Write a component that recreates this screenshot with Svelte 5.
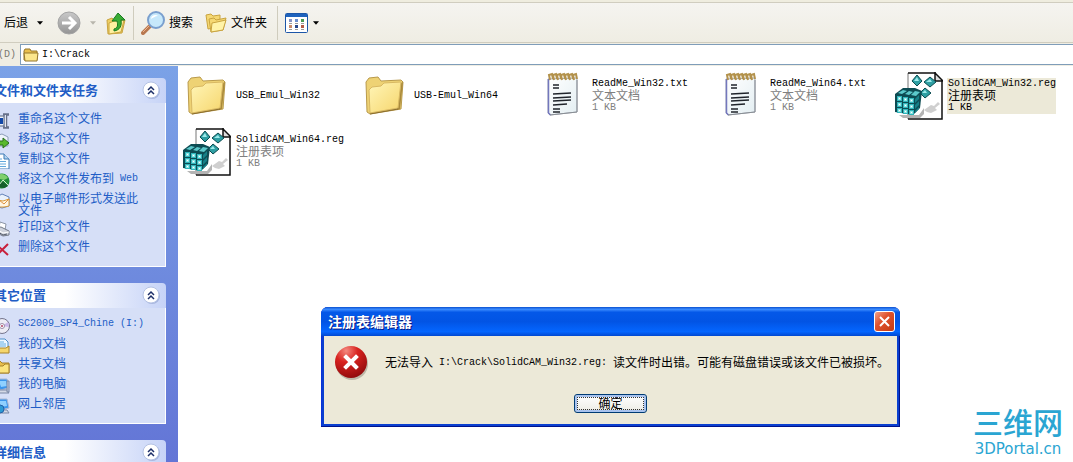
<script>
  let selected = $state("SolidCAM_Win32.reg");
  let showError = $state(true);
  let address = $state("I:\\Crack");

  const files = [
    { name: "USB_Emul_Win32", icon: "folder" },
    { name: "USB-Emul_Win64", icon: "folder" },
    { name: "ReadMe_Win32.txt", icon: "text", type: "文本文档", size: "1 KB" },
    { name: "ReadMe_Win64.txt", icon: "text", type: "文本文档", size: "1 KB" },
    { name: "SolidCAM_Win32.reg", icon: "reg", type: "注册表项", size: "1 KB" },
    { name: "SolidCAM_Win64.reg", icon: "reg", type: "注册表项", size: "1 KB" },
  ];

  const panels = [
    {
      title: "文件和文件夹任务",
      links: [
        { icon: "rename", text: "重命名这个文件" },
        { icon: "move", text: "移动这个文件" },
        { icon: "copy", text: "复制这个文件" },
        { icon: "web", text: "将这个文件发布到", latin: " Web" },
        { icon: "mail", text: "以电子邮件形式发送此文件" },
        { icon: "print", text: "打印这个文件" },
        { icon: "delete", text: "删除这个文件" },
      ],
    },
    {
      title: "其它位置",
      links: [
        { icon: "disc", text: "", latin: "SC2009_SP4_Chine (I:)" },
        { icon: "docs", text: "我的文档" },
        { icon: "shared", text: "共享文档" },
        { icon: "computer", text: "我的电脑" },
        { icon: "network", text: "网上邻居" },
      ],
    },
    { title: "详细信息", links: [] },
  ];

  // cells on the front face of the registry cube
  const front = [
    [2, 24], [8, 25], [14, 26],
    [2, 30], [8, 31], [14, 32],
    [2, 36], [8, 37], [14, 38],
  ];
</script>

{#snippet taskIcon(name)}
  <svg class="task-icon" viewBox="0 0 16 16" aria-hidden="true">
    {#if name === "rename"}
      <path d="M0 3h10v10H0z" fill="#eef3fb" stroke="#56657f" />
      <path d="M0 5h9v6H0z" fill="#1248a8" />
      <path d="M9 1.500h6M9 14.500h6M12 2v12" stroke="#67718a" stroke-width="2.500" fill="none" />
      <path d="M11.500 2v12" stroke="#e4e8f0" />
    {:else if name === "move"}
      <path d="M1 3l7-2 6 3v9H1z" fill="#eef4fb" stroke="#8c9db8" />
      <path d="M3 8h6V5l6 5-6 5v-3H3z" fill="#58b92c" stroke="#28711a" />
    {:else if name === "copy"}
      <path d="M1 1h9l5 5v10H1z" fill="#fff" stroke="#3c78b4" />
      <path d="M10 1v5h5" fill="#b4d4f0" stroke="#3c78b4" />
      <path d="M3 6h5M3 8.500h9M3 11h9M3 13.500h9" stroke="#64a8dc" />
    {:else if name === "web"}
      <circle cx="8" cy="8" r="7.500" fill="#1f8b38" />
      <path d="M2 4c3-4 9-4 12 1l-4 2-4-1z" fill="#7fcf6c" />
      <path d="M4 14l4-6 6 5-4 2z" fill="#155f2c" />
      <path d="M5 12l4-5 5 5" stroke="#d5f2cc" fill="none" />
    {:else if name === "mail"}
      <path d="M1 5l7-4 7 3v9l-7 2-7-2z" fill="#eaf2fc" stroke="#6282b8" />
      <path d="M3 7l6 1 6-2v7l-5 1H3z" fill="#fff6e4" stroke="#d89a3c" />
      <path d="M5 7l5 4 5-5" stroke="#e0903c" fill="none" />
    {:else if name === "print"}
      <path d="M6 1l6 2-1 6-6-2z" fill="#fff" stroke="#8d96a6" />
      <path d="M1 7l6-1 8 4v4l-6 1-8-4z" fill="#cfd3dc" stroke="#737a88" />
      <path d="M2 8l7 4 6-1" stroke="#fff" fill="none" />
      <path d="M4 11l5 3 4-1" stroke="#555c69" fill="none" />
    {:else if name === "delete"}
      <path d="M3 4l11 10M14 3L3 14" stroke="#c8203c" stroke-width="2" fill="none" />
    {:else if name === "disc"}
      <circle cx="8" cy="8" r="7.500" fill="#ececf5" stroke="#74748c" />
      <path d="M8 8l6-4a7 7 0 0 1 1 5z" fill="#c9b8e8" />
      <circle cx="8" cy="8" r="2.500" fill="#fff" stroke="#9a8ca6" />
      <circle cx="8" cy="8" r="1" fill="#b04060" />
    {:else if name === "docs"}
      <path d="M2 1h9l3 3v8H2z" fill="#eef7ff" stroke="#4d8fc8" />
      <path d="M4 4h6M4 6h8M4 8h8" stroke="#65b0e4" />
      <path d="M0 10h12l3-2v7H0z" fill="#f5d66c" stroke="#a8842c" />
    {:else if name === "shared"}
      <path d="M0 3h6l2 2h7v10H0z" fill="#e9bf4c" stroke="#a5812a" />
      <path d="M0 8h9l2-2h4v9H0z" fill="#fbe47e" stroke="#a5812a" />
    {:else}
      <path d="M3 1h10l2 9-9 2z" fill="#3b95ec" stroke="#a9b7d2" />
      <path d="M5 3h7l1 5-6 1z" fill="#8fd0ff" />
      <path d="M1 12h12l2 3H3z" fill="#d4d9e6" stroke="#7a88a6" />
      {#if name === "network"}
        <circle cx="6" cy="11" r="4" fill="#2d9ad4" stroke="#2460a8" />
      {:else}
        <path d="M13 3h2v11h-2z" fill="#c2cbdd" stroke="#7a88a6" />
      {/if}
    {/if}
  </svg>
{/snippet}

{#snippet fileIcon(name)}
  <svg class="file-icon" viewBox="0 0 48 48" aria-hidden="true">
    {#if name === "folder"}
      <path d="M5 10l3-4 9-1 3 4 20-1 2 2-2 27-31 5-3-2z" fill="#eed274" stroke="#b99a4b" />
      <path d="M38 12l4-2-3 27-3 1z" fill="#a98a3c" />
      <path d="M8 18l3-3 9-1 3-3 17-1-3 26-28 5z" fill="url(#folderFill)" stroke="#d8b862" />
      <path d="M9 42l28-5" stroke="#8a6d2e" fill="none" />
    {:else if name === "text"}
      <path d="M9 7l29-1v34l-27 3-2-2z" fill="url(#noteFill)" stroke="#a5abb8" />
      <path d="M9.500 7v34l2 2" stroke="#7377bd" stroke-width="1.500" fill="none" />
      <path d="M38 8v32L11 43" stroke="#898e94" fill="none" />
      {#each [12, 16, 20, 24, 28, 32, 36] as x}
        <path d="M{x - 1} 8l-1-5 3-1 1 5" stroke="#b3924c" stroke-width="2" fill="none" />
      {/each}
      <path d="M14 13h6M14 16h6M14 22l18-1M14 26l18-1M14 29l18-1M14 33l14-1M14 37h7M14 40h7" stroke="#20242b" stroke-width="1.300" fill="none" />
    {:else}
      <path d="M13 1h28l7 7v40H13z" fill="#fff" />
      <path d="M13 1v46" stroke="#777" fill="none" />
      <path d="M13 1h28M13 47h34V8" stroke="#111" stroke-width="1.500" fill="none" />
      <path d="M40 1v8h8z" fill="#ddd" stroke="#111" stroke-width="1.500" />
      <path d="M4 43h20l5-7v6l-4 4H8z" fill="#b4b4b4" />
      <path d="M29 38l7-5 3 1 4-4 2 2-5 4 2 2-6 3-4-1z" fill="#cfcfcf" />
      <g stroke="#0b4b50">
        <path d="M22 3l5 6-5 5-5-5z" fill="#2e9fa3" />
        <path d="M35 5l6 5-6 5-6-5z" fill="#2e9fa3" />
        <path d="M30 16l6 5-6 5-5-5z" fill="#2e9fa3" />
      </g>
      <path d="M22 5l2 4h-5zM35 7l2 3h-6zM30 18l2 3h-5z" fill="#9eeaea" />
      <path d="M0 22l8-6h12l7 3-2 17-7 7-18-3z" fill="#0d4c53" />
      <path d="M3 21l5-3 4 1-5 3zM10 22l4-3 4 1-4 3zM16 23l4-4 5 1-4 4z" fill="#5cc9cb" />
      <path d="M20 27l4-4v4l-4 4zM20 33l4-4v4l-4 4zM20 39l4-4v2l-4 4z" fill="#168087" />
      {#each front as [x, y]}
        <rect {x} {y} width="5" height="5" fill="#2fb5bb" />
        <rect x={x + 1} y={y + 1} width="3" height="3" fill="#8fe4e4" />
        <rect x={x + 2} y={y + 2} width="1" height="1" fill="#fff" />
      {/each}
    {/if}
  </svg>
{/snippet}

<svg class="defs" aria-hidden="true">
  <defs>
    <linearGradient id="folderFill" x1="0" y1="0" x2="1" y2="1">
      <stop offset="0" stop-color="#fff6b8" />
      <stop offset="1" stop-color="#f6d56c" />
    </linearGradient>
    <linearGradient id="noteFill" x1="0" y1="0" x2="1" y2="1">
      <stop offset="0" stop-color="#ffffff" />
      <stop offset="1" stop-color="#e3eef2" />
    </linearGradient>
    <radialGradient id="errorFill" cx="0.35" cy="0.15" r="0.9">
      <stop offset="0" stop-color="#f58a80" />
      <stop offset="0.4" stop-color="#d8231f" />
      <stop offset="1" stop-color="#8e0a0c" />
    </radialGradient>
    <linearGradient id="grayFill" x1="0" y1="0" x2="0" y2="1">
      <stop offset="0" stop-color="#c9c9c9" />
      <stop offset="1" stop-color="#949494" />
    </linearGradient>
  </defs>
</svg>

<div class="explorer">
  <header class="toolbar">
    <button class="tool">
      后退
      <svg class="caret" viewBox="0 0 7 4"><path d="M0 0h7L3.500 4z" /></svg>
    </button>
    <button class="tool forward" aria-label="前进" disabled>
      <svg width="24" height="24" viewBox="0 0 24 24">
        <circle cx="12" cy="12" r="11" fill="url(#grayFill)" stroke="#a4a4a4" />
        <path d="M5 12h12M12 6l6 6-6 6" stroke="#fff" stroke-width="3" fill="none" />
      </svg>
      <svg class="caret" viewBox="0 0 7 4"><path d="M0 0h7L3.500 4z" /></svg>
    </button>
    <button class="tool up" aria-label="向上">
      <svg width="20" height="24" viewBox="0 0 20 24">
        <path d="M1 9l5-2 2 2 9-2 2 2-3 13-14 1z" fill="#efcf62" stroke="#c9a440" />
        <path d="M3 12l5-2 10-1-3 12-12 2z" fill="#fff0a0" stroke="#c9a440" />
        <path d="M8 18c4-1 4-4 3-8H6l6-8 7 7h-4c1 6-1 10-7 11z" fill="#39ac35" stroke="#197a20" />
      </svg>
    </button>
    <span class="divider"></span>
    <button class="tool search">
      <svg width="24" height="24" viewBox="0 0 24 24">
        <path d="M2 22l7-7" stroke="#b87850" stroke-width="4" stroke-linecap="round" />
        <path d="M2 21l6-6" stroke="#f0b48c" stroke-width="1" />
        <circle cx="15" cy="9" r="8" fill="#c6e8fb" stroke="#7a9fce" stroke-width="2" />
        <path d="M10 8c0-4 5-5 7-3-3 0-5 2-7 3z" fill="#fff" />
      </svg>
      搜索
    </button>
    <button class="tool folders">
      <svg width="22" height="20" viewBox="0 0 22 20">
        <path d="M1 2l5-1 2 2 7-1v12L3 16z" fill="#f5d873" stroke="#c9a440" />
        <path d="M4 6l5-1 2 2 10-2-3 12-12 2z" fill="#f5d873" stroke="#c9a440" />
        <path d="M7 10l5-1 9-2-3 10-12 2z" fill="#fff3a8" stroke="#c9a440" />
      </svg>
      文件夹
    </button>
    <span class="divider"></span>
    <button class="tool views" aria-label="查看">
      <svg width="23" height="20" viewBox="0 0 23 20">
        <rect x="0.500" y="0.500" width="22" height="19" rx="1" fill="#fff" stroke="#1c56a8" />
        <path d="M1 1h21v3H1z" fill="#1f63bd" />
        <path d="M4 6h3v3H4z" fill="#8794c4" /><path d="M10 6h3v3h-3z" fill="#6b8fd0" /><path d="M16 6h3v3h-3z" fill="#4b9a52" />
        <path d="M4 12h3v3H4z" fill="#c98a6a" /><path d="M10 12h3v3h-3z" fill="#27488c" /><path d="M16 12h3v3h-3z" fill="#b35c46" />
        <path d="M4 10.500h3M10 10.500h3M16 10.500h3M4 16.500h3M10 16.500h3M16 16.500h3" stroke="#9a9a9a" />
      </svg>
      <svg class="caret" viewBox="0 0 7 4"><path d="M0 0h7L3.500 4z" /></svg>
    </button>
  </header>

  <div class="address">
    <label for="address">地址<span class="latin">(D)</span></label>
    <div class="field">
      <svg width="16" height="14" viewBox="0 0 16 14">
        <path d="M1 3l1-2h5l1 2h6v9H1z" fill="#e9bf4c" stroke="#94762c" />
        <path d="M1 5h14l-1 8H2z" fill="#fbe68c" stroke="#94762c" />
      </svg>
      <input id="address" class="latin" bind:value={address} spellcheck="false" />
    </div>
  </div>

  <div class="content">
    <aside>
      {#each panels as panel}
        <section class="panel">
          <h2>
            {panel.title}
            <button class="collapse" aria-label="折叠">
              <svg width="19" height="19" viewBox="0 0 19 19">
                <circle cx="10" cy="10" r="8" fill="#7f92c4" opacity="0.500" />
                <circle cx="9" cy="9" r="8" fill="#fff" stroke="#b4c2e4" />
                <path d="M6 9l3-3 3 3M6 13l3-3 3 3" stroke="#1d2f68" stroke-width="1.500" fill="none" />
              </svg>
            </button>
          </h2>
          {#if panel.links.length}
            <ul>
              {#each panel.links as link}
                <li>
                  {@render taskIcon(link.icon)}
                  <a href="#{link.icon}">{link.text}{#if link.latin}<span class="latin">{link.latin}</span>{/if}</a>
                </li>
              {/each}
            </ul>
          {/if}
        </section>
      {/each}
    </aside>

    <main>
      {#each files as file}
        <button
          class="file"
          class:selected={selected === file.name}
          onclick={() => (selected = file.name)}
        >
          {@render fileIcon(file.icon)}
          <span class="info">
            <span class="latin">{file.name}</span>
            {#if file.type}
              <span class="meta">{file.type}</span>
              <span class="meta latin">{file.size}</span>
            {/if}
          </span>
        </button>
      {/each}
    </main>
  </div>

  <div class="watermark">
    <span class="mark">三维网</span>
    <span class="site">3DPortal.cn</span>
  </div>

  {#if showError}
    <div class="dialog" role="alertdialog" aria-labelledby="dialog-title">
      <div class="titlebar">
        <h1 id="dialog-title">注册表编辑器</h1>
        <button class="close" aria-label="关闭" onclick={() => (showError = false)}>
          <svg width="13" height="13" viewBox="0 0 13 13">
            <path d="M2 2l9 9M11 2l-9 9" stroke="#fff" stroke-width="2" />
          </svg>
        </button>
      </div>
      <div class="dialog-body">
        <div class="message">
          <svg width="34" height="34" viewBox="0 0 34 34">
            <circle cx="17" cy="18" r="16" fill="#8d8878" opacity="0.500" />
            <circle cx="16" cy="16" r="16" fill="url(#errorFill)" />
            <path d="M11 11l10 10M21 11L11 21" stroke="#fff" stroke-width="4" stroke-linecap="square" />
          </svg>
          <p>无法导入<span class="latin">{" I:\\Crack\\SolidCAM_Win32.reg: "}</span>读文件时出错。可能有磁盘错误或该文件已被损坏。</p>
        </div>
        <button class="ok" onclick={() => (showError = false)}>确定</button>
      </div>
    </div>
  {/if}
</div>

<style>
  :global(body) {
    margin: 0;
    background: #fff;
  }
  .explorer {
    position: relative;
    display: flex;
    flex-direction: column;
    height: 100vh;
    overflow: hidden;
    font: 12px/12px "Liberation Sans", "Noto Sans CJK SC", sans-serif;
    color: #000;
  }
  .explorer button {
    font-family: inherit;
    font-size: 12px;
    line-height: 12px;
    color: inherit;
    border: none;
    background: none;
    padding: 0;
  }
  .latin {
    font-family: "Liberation Mono", monospace;
    font-size: 10px;
    line-height: 12px;
    vertical-align: top;
    white-space: pre;
  }
  .defs {
    position: absolute;
    width: 0;
    height: 0;
  }

  .toolbar {
    flex: none;
    display: flex;
    align-items: center;
    height: 39px;
    border-top: 1px solid #d0cdbf;
    border-bottom: 1px solid #d0cdbf;
    margin-top: 2px;
    padding-left: 4px;
    background: linear-gradient(#f5f4f0, #efede3);
    box-shadow: 0 -2px #efeddf;
  }
  .tool {
    display: flex;
    align-items: center;
    gap: 4px;
  }
  .caret {
    width: 6px;
    height: 4px;
    margin-left: 5px;
  }
  .forward {
    margin-left: 14px;
  }
  .forward .caret {
    fill: #b8b6ac;
  }
  .up {
    margin-left: 10px;
  }
  .divider {
    width: 1px;
    height: 34px;
    margin: 0 7px;
    background: #cfccbd;
  }
  .folders {
    margin-left: 12px;
  }
  .folders + .divider {
    margin-left: 10px;
  }
  .views {
    gap: 0;
  }

  .address {
    flex: none;
    display: flex;
    align-items: center;
    gap: 4px;
    padding: 1px 0;
    background: #efede3;
  }
  .address label {
    display: flex;
    align-items: center;
    justify-content: flex-end;
    width: 16px;
    overflow: hidden;
    white-space: nowrap;
    color: #7b7970;
  }
  .field {
    flex: 1;
    display: flex;
    align-items: center;
    gap: 3px;
    height: 19px;
    padding-left: 2px;
    border: 1px solid #7f9db9;
    border-right: none;
    background: #fff;
  }
  .field input {
    flex: 1;
    border: none;
    outline: none;
    padding: 0;
    color: #000;
  }

  .content {
    flex: 1;
    display: flex;
    min-height: 0;
  }
  aside {
    flex: none;
    box-sizing: border-box;
    width: 208px;
    margin-left: -30px;
    padding: 12px;
    overflow: hidden;
    background: linear-gradient(#7ba2e7, #6375d6);
  }
  .panel {
    margin-bottom: 16px;
  }
  .panel h2 {
    display: flex;
    align-items: center;
    justify-content: space-between;
    height: 25px;
    margin: 0;
    padding: 0 5px 0 12px;
    border-radius: 4px 4px 0 0;
    font-size: 13px;
    line-height: 25px;
    color: #215dc6;
    background: linear-gradient(to right, #fff 45%, #c6d3f7);
  }
  .collapse {
    display: flex;
  }
  .panel ul {
    display: flex;
    flex-direction: column;
    gap: 4px;
    margin: 0;
    padding: 10px 20px 9px 11px;
    list-style: none;
    border: 1px solid #fff;
    border-top: none;
    background: #d6dff7;
  }
  .panel li {
    display: flex;
    align-items: flex-start;
    gap: 8px;
  }
  .task-icon {
    flex: none;
    width: 16px;
    height: 16px;
  }
  .panel a {
    color: #215dc6;
    text-decoration: none;
  }
  .panel a:hover {
    color: #428eff;
    text-decoration: underline;
  }

  main {
    flex: 1;
    display: grid;
    grid-template-columns: repeat(auto-fill, 178px);
    grid-auto-rows: 56px;
    align-content: start;
    padding: 2px 0 0 5px;
    background: #fff;
  }
  .file {
    display: flex;
    align-items: center;
    gap: 4px;
    text-align: left;
  }
  .file-icon {
    flex: none;
    width: 48px;
    height: 48px;
  }
  .info {
    display: flex;
    flex-direction: column;
    padding-left: 1px;
  }
  .meta {
    color: #808080;
  }
  .selected .info {
    background: #ece9d8;
  }
  .selected .meta {
    color: #000;
  }

  .watermark {
    position: absolute;
    right: 10px;
    bottom: 4px;
    display: flex;
    flex-direction: column;
    align-items: center;
    color: #2aa5d2;
  }
  .mark {
    font-size: 30px;
    font-weight: 500;
    line-height: 32px;
  }
  .site {
    font-family: "DejaVu Sans", sans-serif;
    font-size: 15px;
    line-height: 18px;
  }

  .dialog {
    position: absolute;
    top: 307px;
    left: 321px;
    box-sizing: border-box;
    width: 579px;
    padding: 0 3px 3px;
    border-radius: 7px 7px 0 0;
    background: #0a3fd0;
    box-shadow: inset -1px -1px #00138c, inset 1px 0 #0831d9;
  }
  .titlebar {
    display: flex;
    align-items: center;
    justify-content: space-between;
    height: 29px;
    margin: 0 -3px;
    padding: 0 5px 0 7px;
    border-radius: 7px 7px 0 0;
    background: linear-gradient(#0a50d0, #3c8cff 8%, #0458e8 18%, #0254e4 50%, #0466ff 85%, #0148d0);
  }
  .titlebar h1 {
    margin: 0;
    font-size: 14px;
    line-height: 28px;
    color: #fff;
    text-shadow: 1px 1px #0a1883;
  }
  .titlebar .close {
    display: flex;
    align-items: center;
    justify-content: center;
    width: 21px;
    height: 21px;
    border: 1px solid #fff;
    border-radius: 3px;
    background: linear-gradient(135deg, #f0a088, #e0532f 40%, #c43a12);
  }
  .dialog-body {
    display: flex;
    flex-direction: column;
    align-items: center;
    gap: 14px;
    padding: 10px 11px 11px;
    background: #ece9d8;
  }
  .message {
    display: flex;
    align-items: center;
    gap: 16px;
    align-self: stretch;
  }
  .message svg {
    flex: none;
  }
  .message p {
    margin: 0;
    white-space: nowrap;
  }
  .dialog-body .ok {
    width: 73px;
    height: 19px;
    border: 1px solid #003c74;
    border-radius: 3px;
    background: linear-gradient(#fff, #f0f0ea 80%, #d8d4c6);
    box-shadow: inset 0 0 0 2px #a9c3ee;
    outline: 1px dotted #333;
    outline-offset: -4px;
  }
</style>
